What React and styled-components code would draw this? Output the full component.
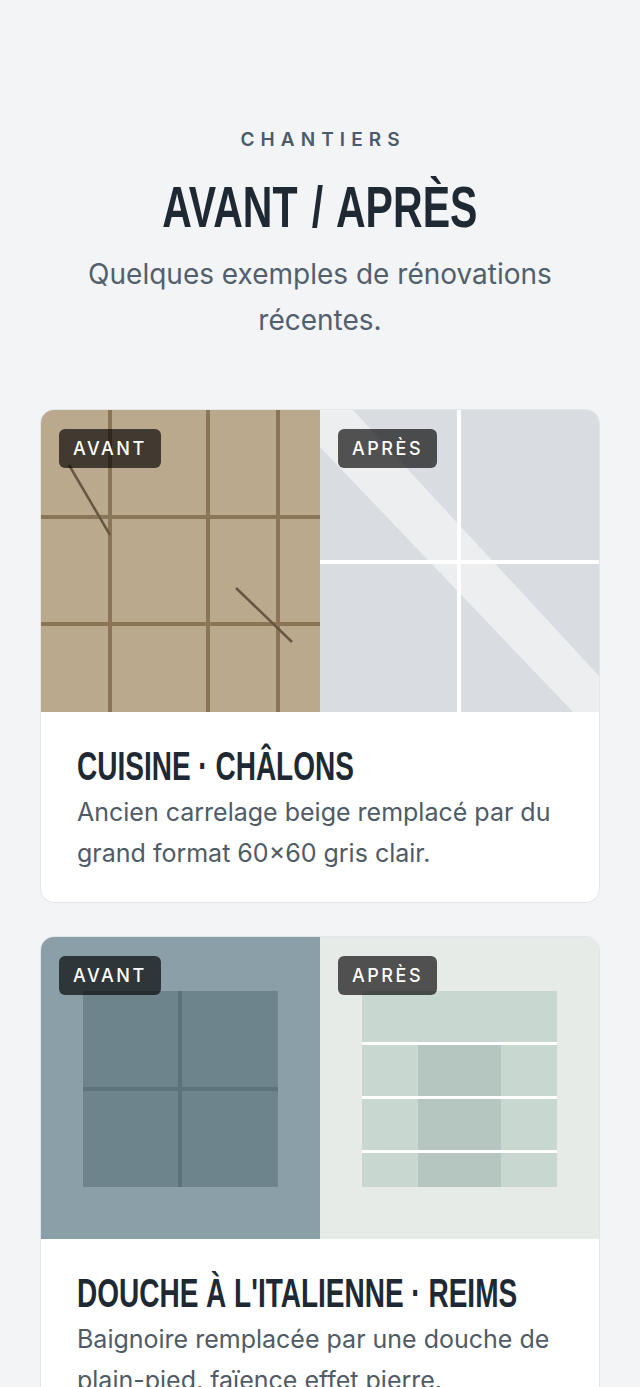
import React from "react";
import styled, { createGlobalStyle } from "styled-components";

const GlobalStyle = createGlobalStyle`
  html, body {
    margin: 0;
    padding: 0;
    background: #f3f4f6;
  }
  body {
    font-family: Inter, "Noto Sans", "Liberation Sans", sans-serif;
    -webkit-font-smoothing: antialiased;
  }
`;

const Section = styled.section`
  padding: 126px 40px 40px;
  display: flex;
  flex-direction: column;
  align-items: center;
`;

const Eyebrow = styled.div`
  font-size: 19px;
  font-weight: 600;
  letter-spacing: 0.32em;
  line-height: 28px;
  color: #4b5b6b;
  text-transform: uppercase;
  margin-right: -0.32em;
`;

// condensed display face: no condensed family is installed, so squeeze Liberation Sans
const Title = styled.h2`
  display: inline-block;
  margin: 21px 0 0;
  font-family: "Liberation Sans", Arimo, sans-serif;
  font-weight: 700;
  font-size: 57px;
  line-height: 64px;
  color: #1e2934;
  text-transform: uppercase;
  white-space: nowrap;
  word-spacing: 4px;
  transform: scaleX(0.72);
`;

const Lead = styled.p`
  margin: 12px 0 0;
  max-width: 520px;
  text-align: center;
  font-size: 28px;
  line-height: 46px;
  color: #52606d;
`;

const List = styled.div`
  align-self: stretch;
  margin-top: 66px;
  display: flex;
  flex-direction: column;
  gap: 33px;
`;

const Card = styled.article`
  background: #fff;
  border: 1px solid #e2e5e9;
  border-radius: 14px;
  overflow: hidden;
`;

const Pair = styled.div`
  display: grid;
  grid-template-columns: 1fr 1fr;
  height: 302px;
`;

const Panel = styled.div`
  position: relative;
  background: ${(p) => p.$bg};

  svg {
    display: block;
    width: 100%;
    height: 100%;
  }
`;

const Badge = styled.span`
  position: absolute;
  top: 19px;
  left: 18px;
  padding: 0 14px;
  height: 39px;
  display: flex;
  align-items: center;
  border-radius: 6px;
  background: rgba(0, 0, 0, 0.66);
  color: #fff;
  font-size: 18px;
  font-weight: 500;
  letter-spacing: 0.14em;
`;

const Body = styled.div`
  padding: 30px 36px 28px;
`;

const CardTitle = styled.h3`
  margin: 0;
  font-family: "Liberation Sans", Arimo, sans-serif;
  font-weight: 700;
  font-size: 40px;
  line-height: 48px;
  color: #1e2934;
  text-transform: uppercase;
  white-space: nowrap;
  transform: scaleX(0.7);
  transform-origin: left center;
`;

const Text = styled.p`
  margin: 2px 0 0;
  font-size: 25px;
  line-height: 41px;
  color: #4f5b67;
`;

function BeigeTiles() {
  return (
    <svg viewBox="0 0 279 302" preserveAspectRatio="none">
      <g fill="#8a7657">
        <rect x="67" y="0" width="4" height="302" />
        <rect x="165" y="0" width="4" height="302" />
        <rect x="235" y="0" width="4" height="302" />
        <rect x="0" y="105" width="279" height="4" />
        <rect x="0" y="212" width="279" height="4" />
      </g>
      <g stroke="#685642" strokeWidth="2.5">
        <line x1="28" y1="55" x2="69" y2="125" />
        <line x1="195" y1="178" x2="251" y2="232" />
      </g>
    </svg>
  );
}

function GreyTiles() {
  return (
    <svg viewBox="0 0 279 302" preserveAspectRatio="none">
      <polygon
        points="0,0 33,0 279,266 279,302 253,302 0,37"
        fill="#ffffff"
        opacity="0.5"
      />
      <g fill="#ffffff">
        <rect x="137" y="0" width="4" height="302" />
        <rect x="0" y="150" width="279" height="4" />
      </g>
    </svg>
  );
}

function SlateTiles() {
  return (
    <svg viewBox="0 0 279 302" preserveAspectRatio="none">
      <rect x="42" y="54" width="195" height="196" fill="#6e848c" />
      <g fill="#5d737b">
        <rect x="137" y="54" width="4" height="196" />
        <rect x="42" y="150" width="195" height="4" />
      </g>
    </svg>
  );
}

function ShowerTiles() {
  return (
    <svg viewBox="0 0 279 302" preserveAspectRatio="none">
      <rect x="42" y="54" width="195" height="196" fill="#c9d7d1" />
      <rect x="98" y="107" width="83" height="143" fill="#b5c5bf" />
      <g fill="#ffffff">
        <rect x="42" y="105" width="195" height="3" />
        <rect x="42" y="159" width="195" height="3" />
        <rect x="42" y="213" width="195" height="3" />
      </g>
    </svg>
  );
}

const projects = [
  {
    title: "Cuisine · Châlons",
    text: "Ancien carrelage beige remplacé par du grand format 60×60 gris clair.",
    before: { bg: "#bba98e", art: <BeigeTiles /> },
    after: { bg: "#d9dce0", art: <GreyTiles /> },
  },
  {
    title: "Douche à l'italienne · Reims",
    text: "Baignoire remplacée par une douche de plain-pied, faïence effet pierre.",
    before: { bg: "#8a9fa8", art: <SlateTiles /> },
    after: { bg: "#e6ebe8", art: <ShowerTiles /> },
  },
];

function ProjectCard({ project }) {
  return (
    <Card>
      <Pair>
        <Panel $bg={project.before.bg}>
          {project.before.art}
          <Badge>AVANT</Badge>
        </Panel>
        <Panel $bg={project.after.bg}>
          {project.after.art}
          <Badge>APRÈS</Badge>
        </Panel>
      </Pair>
      <Body>
        <CardTitle>{project.title}</CardTitle>
        <Text>{project.text}</Text>
      </Body>
    </Card>
  );
}

export default function App() {
  return (
    <>
      <GlobalStyle />
      <Section>
        <Eyebrow>Chantiers</Eyebrow>
        <Title>Avant / Après</Title>
        <Lead>Quelques exemples de rénovations récentes.</Lead>
        <List>
          {projects.map((p) => (
            <ProjectCard key={p.title} project={p} />
          ))}
        </List>
      </Section>
    </>
  );
}
